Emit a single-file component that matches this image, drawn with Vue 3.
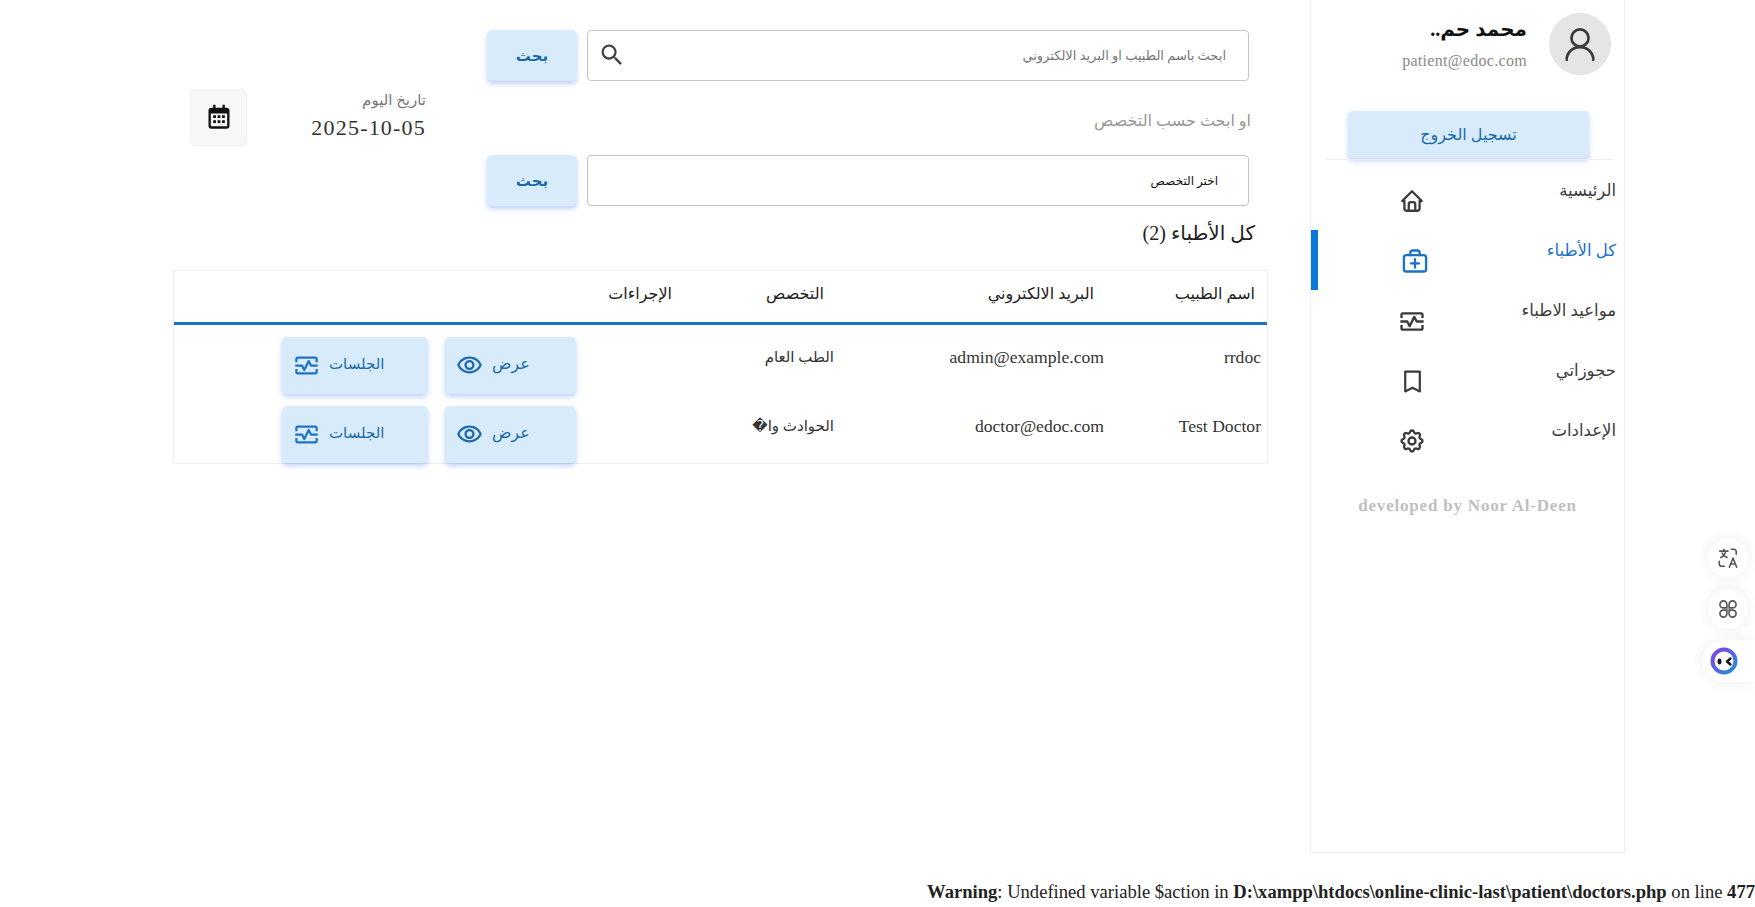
<script setup>
const navItems = [
  { label: 'الرئيسية', icon: 'home' },
  { label: 'كل الأطباء', icon: 'case', active: true },
  { label: 'مواعيد الاطباء', icon: 'pulse' },
  { label: 'حجوزاتي', icon: 'bookmark' },
  { label: 'الإعدادات', icon: 'gear' },
]
const doctors = [
  { name: 'rrdoc', email: 'admin@example.com', spec: 'الطب العام' },
  { name: 'Test Doctor', email: 'doctor@edoc.com', spec: 'الحوادث وا\uFFFD' },
]
const pulse = 'M20 4H4c-1.1 0-2 .9-2 2v3h2V6h16v3h2V6c0-1.1-.9-2-2-2zM20 18H4v-3H2v3c0 1.1.9 2 2 2h16c1.1 0 2-.9 2-2v-3h-2v3zM14.89 7.55c-.34-.68-1.45-.68-1.79 0L10 13.76l-1.11-2.21A1.02 1.02 0 0 0 8 11H2v2h5.38l1.72 3.45c.18.34.52.55.9.55s.72-.21.89-.55L14 10.24l1.11 2.21c.17.34.51.55.89.55h6v-2h-5.38l-1.73-3.45z'
const eye = 'M12 6c3.79 0 7.17 2.13 8.82 5.5C19.17 14.87 15.79 17 12 17s-7.17-2.13-8.82-5.5C4.83 8.13 8.21 6 12 6m0-2C7 4 2.73 7.11 1 11.5 2.73 15.89 7 19 12 19s9.27-3.11 11-7.5C21.27 7.11 17 4 12 4zm0 5c1.38 0 2.5 1.12 2.5 2.5S13.38 14 12 14s-2.5-1.12-2.5-2.5S10.62 9 12 9m0-2c-2.48 0-4.5 2.02-4.5 4.5S9.52 16 12 16s4.5-2.02 4.5-4.5S14.48 7 12 7z'
const gear = 'M10.325 4.317c.426-1.756 2.924-1.756 3.35 0a1.724 1.724 0 0 0 2.573 1.066c1.543-.94 3.31.826 2.37 2.37a1.724 1.724 0 0 0 1.065 2.572c1.756.426 1.756 2.924 0 3.35a1.724 1.724 0 0 0-1.066 2.573c.94 1.543-.826 3.31-2.37 2.37a1.724 1.724 0 0 0-2.572 1.065c-.426 1.756-2.924 1.756-3.35 0a1.724 1.724 0 0 0-2.573-1.066c-1.543.94-3.31-.826-2.37-2.37a1.724 1.724 0 0 0-1.065-2.572c-1.756-.426-1.756-2.924 0-3.35a1.724 1.724 0 0 0 1.066-2.573c-.94-1.543.826-3.31 2.37-2.37c1 .608 2.296.07 2.572-1.065z'
</script>

<template>
  <div class="page" dir="rtl">
    <div class="shell">
      <aside class="sidebar">
        <div class="profile">
          <div class="avatar">
            <svg viewBox="0 0 24 24" width="38" height="38" fill="none" stroke="#3a3a3a" stroke-width="1.7" stroke-linecap="round"><circle cx="12" cy="8.2" r="5.4"/><path d="M3.6 22c0-4.6 3.7-8 8.4-8s8.4 3.4 8.4 8"/></svg>
          </div>
          <div class="who">
            <div class="who-name">محمد حم..</div>
            <div class="who-mail">patient@edoc.com</div>
          </div>
        </div>
        <button class="soft logout">تسجيل الخروج</button>
        <div class="divider"></div>
        <nav>
          <div v-for="item in navItems" :key="item.icon" class="nav-row" :class="{ active: item.active }">
            <span class="nav-label">{{ item.label }}</span>
            <span class="nav-icon">
              <svg v-if="item.icon === 'home'" viewBox="0 0 24 24" width="26" height="26" fill="none" stroke="currentColor" stroke-width="2.1" stroke-linejoin="round" stroke-linecap="round"><path d="M5 12H3l9-9 9 9h-2M5 12v7a2 2 0 0 0 2 2h10a2 2 0 0 0 2-2v-7M9 21v-6a2 2 0 0 1 2-2h2a2 2 0 0 1 2 2v6"/></svg>
              <svg v-else-if="item.icon === 'case'" class="shift-case" viewBox="0 0 24 24" width="28" height="28" fill="none" stroke="currentColor" stroke-width="2" stroke-linejoin="round" stroke-linecap="round"><rect x="2.500" y="7" width="19" height="14" rx="2"/><path d="M8 7V5a2 2 0 0 1 2-2h4a2 2 0 0 1 2 2v2M8.500 14h7M12 10.500v7"/></svg>
              <svg v-else-if="item.icon === 'pulse'" viewBox="0 0 24 24" width="29" height="29" fill="currentColor"><path :d="pulse"/></svg>
              <svg v-else-if="item.icon === 'bookmark'" viewBox="0 0 24 24" width="25" height="25" fill="none" stroke="currentColor" stroke-width="2.100" stroke-linejoin="round"><path d="M5 2.500h14v19l-7-3.400-7 3.400z"/></svg>
              <svg v-else viewBox="0 0 24 24" width="28" height="28" fill="none" stroke="currentColor" stroke-width="2"><path :d="gear"/><circle cx="12" cy="12" r="3"/></svg>
            </span>
          </div>
        </nav>
        <div class="credit" dir="ltr">developed by Noor Al-Deen</div>
      </aside>

      <main class="main">
        <div class="top">
          <form class="filters" @submit.prevent>
            <div class="field-row">
              <div class="search-box">
                <input class="control" type="text" placeholder="ابحث باسم الطبيب او البريد الالكتروني" />
                <svg class="search-icon" viewBox="0 0 24 24" width="28" height="28" fill="#444"><path d="M15.500 14h-.79l-.28-.27A6.470 6.470 0 0 0 16 9.500 6.500 6.500 0 1 0 9.500 16c1.610 0 3.090-.59 4.230-1.570l.27.28v.79l5 4.990L20.490 19l-4.990-5zm-6 0C7.010 14 5 11.990 5 9.500S7.010 5 9.500 5 14 7.010 14 9.500 11.990 14 9.500 14z"/></svg>
              </div>
              <button class="soft search-btn">بحث</button>
            </div>
            <div class="or-label">او ابحث حسب التخصص</div>
            <div class="field-row">
              <select class="control select"><option>اختر التخصص</option></select>
              <button class="soft search-btn">بحث</button>
            </div>
          </form>
          <div class="today">
            <div class="today-text">
              <div class="today-label">تاريخ اليوم</div>
              <div class="today-date" dir="ltr">2025-10-05</div>
            </div>
            <div class="cal-box">
              <svg viewBox="0 0 24 24" width="28" height="28" fill="#111"><path d="M7 1.500h2V4h6V1.500h2V4h1.500A2.500 2.500 0 0 1 21 6.500v13a2.500 2.500 0 0 1-2.500 2.500h-13A2.500 2.500 0 0 1 3 19.500v-13A2.500 2.500 0 0 1 5.500 4H7zM5 9v10.500c0 .28.22.5.5.5h13a.5.5 0 0 0 .5-.5V9z"/><path d="M7 10.500h2.400v2.400H7zM10.800 10.500h2.400v2.400h-2.400zM14.600 10.500H17v2.400h-2.400zM7 14.800h2.400v2.400H7zM10.800 14.800h2.400v2.400h-2.400zM14.600 14.800H17v2.400h-2.400z"/></svg>
            </div>
          </div>
        </div>

        <h2 class="title">كل الأطباء (2)</h2>

        <table class="table">
          <colgroup>
            <col class="c-name" /><col class="c-mail" /><col class="c-spec" /><col />
          </colgroup>
          <thead>
            <tr>
              <th>اسم الطبيب</th>
              <th>البريد الالكتروني</th>
              <th>التخصص</th>
              <th>الإجراءات</th>
            </tr>
          </thead>
          <tbody>
            <tr v-for="doc in doctors" :key="doc.email">
              <td><span dir="ltr">{{ doc.name }}</span></td>
              <td><span dir="ltr">{{ doc.email }}</span></td>
              <td class="spec">{{ doc.spec }}</td>
              <td class="actions">
                <div class="action-row">
                  <button class="soft act view">
                    <span class="act-text">عرض</span>
                    <svg viewBox="0 0 24 24" width="27" height="27" fill="#1f6aae"><path :d="eye"/></svg>
                  </button>
                  <button class="soft act sessions">
                    <span class="act-text sessions-text">الجلسات</span>
                    <svg viewBox="0 0 24 24" width="27" height="27" fill="#1d74c4"><path :d="pulse"/></svg>
                  </button>
                </div>
              </td>
            </tr>
          </tbody>
        </table>
      </main>
    </div>

    <p class="warning" dir="ltr"><b>Warning</b>: Undefined variable $action in <b>D:\xampp\htdocs\online-clinic-last\patient\doctors.php</b> on line <b>477</b></p>

    <div class="floats" dir="ltr">
      <div class="float-btn">
        <svg viewBox="0 0 24 24" width="22" height="22" fill="none" stroke="#555" stroke-width="1.700" stroke-linecap="round" stroke-linejoin="round"><path d="M3 4.500h9M7.500 2.500v2M4 11.500c2.500-1 4.500-3.500 5.500-7M5.500 6.500c1 2.500 3 4 5.500 5M13.500 22l4-10 4 10M15 18.500h5M15.500 2.500h3a2.500 2.500 0 0 1 2.500 2.500v3M2.500 15.500v3a2.500 2.500 0 0 0 2.500 2.500h3"/></svg>
      </div>
      <div class="float-btn">
        <svg viewBox="0 0 24 24" width="22" height="22" fill="none" stroke="#555" stroke-width="1.800"><path d="M10.800 10.800H7a3.800 3.800 0 1 1 3.800-3.800zM13.200 10.800V7A3.800 3.800 0 1 1 17 10.800zM10.800 13.200V17A3.800 3.800 0 1 1 7 13.200zM13.200 13.200H17a3.800 3.800 0 1 1-3.800 3.800z"/></svg>
      </div>
      <div class="float-pill">
        <svg viewBox="0 0 28 28" width="28" height="28"><defs><linearGradient id="botg" x1="0" y1="0" x2="1" y2="1"><stop offset="0" stop-color="#8b3fe0"/><stop offset="1" stop-color="#1f8fe0"/></linearGradient></defs><circle cx="14" cy="14" r="11.500" fill="#fff" stroke="url(#botg)" stroke-width="4"/><ellipse cx="9.500" cy="14.500" rx="2" ry="3" fill="#15151f"/><path d="M20.500 11.500l-3.500 3 3.500 3" fill="none" stroke="#15151f" stroke-width="2.400" stroke-linecap="round" stroke-linejoin="round"/></svg>
      </div>
    </div>
  </div>
</template>

<style>
html, body { margin: 0; background: #fff; }
</style>

<style scoped>
.page {
  position: relative;
  height: 907px;
  overflow: hidden;
  font-family: "Liberation Serif", "DejaVu Sans", serif;
  color: #222;
  background: #fff;
}
.shell { display: flex; height: 853px; padding: 0 130px 0 173px; gap: 42px; }
.sidebar {
  width: 315px;
  flex: none;
  box-sizing: border-box;
  border: 1px solid #eeeeee;
  border-top: 0;
  padding-top: 13px;
}
.profile { display: flex; align-items: flex-start; padding-right: 13px; height: 98px; }
.avatar {
  width: 62px; height: 62px; border-radius: 50%;
  background: #e5e5e5;
  display: flex; align-items: center; justify-content: center;
}
.who { margin-right: 22px; }
.who-name { font-size: 20px; font-weight: 700; color: #111; line-height: 30px; margin-top: 1px; }
.who-mail { font-size: 16px; color: #8a8a8a; line-height: 20px; margin-top: 7px; letter-spacing: .3px; }
.soft {
  background: #d8ebfa;
  color: #1969aa;
  border: 0;
  border-radius: 5px;
  box-shadow: 0 3px 5px 0 rgba(57, 108, 240, .3);
  font-family: inherit;
  padding: 0;
}
.logout { display: block; width: 241px; height: 47px; margin-right: 35px; font-size: 16px; }
.divider { height: 1px; background: #eeeeee; margin: 1px 11px 0 11px; width: 287px; }
nav { margin-top: 10px; }
.nav-row { height: 60px; box-sizing: border-box; display: flex; position: relative; padding-right: 8px; color: #3a3a3a; }
.nav-row.active { color: #1a73c8; }
.nav-row.active::after {
  content: ""; position: absolute; left: 0; top: 0; bottom: 0; width: 7px; background: #0a76d8;
}
.nav-label { font-size: 16.500px; line-height: 24px; margin-top: 9px; }
.nav-icon { position: absolute; left: 87px; top: 17px; width: 28px; height: 28px; display: flex; align-items: center; justify-content: center; }
.shift-case { position: relative; left: 3px; }
.credit { margin-top: 26px; text-align: center; font-size: 17px; font-weight: 700; color: #c0c0c0; letter-spacing: .8px; }

.main { width: 1095px; flex: none; }
.top { display: flex; align-items: center; padding-top: 30px; }
.filters { width: 762px; margin-right: 19px; flex: none; }
.field-row { display: flex; gap: 10px; height: 51px; }
.search-box { position: relative; flex: 1; display: flex; }
.control {
  flex: 1; min-width: 0; box-sizing: border-box; height: 51px;
  border: 1px solid #c4c4c4; border-radius: 4px; background: #fff;
  font-family: inherit; font-size: 13px; padding: 0 22px; color: #222; outline: 0;
}
.control::placeholder { color: #777; }
.select { appearance: none; font-size: 12px; padding: 0 30px; color: #111; }
.search-icon { position: absolute; left: 11px; top: 11px; }
.search-btn { width: 90px; height: 51px; font-size: 15px; font-weight: 700; flex: none; }
.or-label { margin: 0 -2px 0 0; height: 74px; line-height: 80px; font-size: 16px; color: #999; }
.today { flex: 1; display: flex; justify-content: space-between; align-items: center; padding: 0 18px 2px 17px; margin-right: 43px; }
.today-text { text-align: right; margin-top: -3px; }
.today-label { font-size: 15px; color: #777; line-height: 22px; margin-bottom: 3px; }
.today-date { font-size: 22px; color: #333; line-height: 28px; letter-spacing: 1.200px; text-align: right; }
.cal-box { width: 57px; height: 57px; box-sizing: border-box; background: #f7f7f7; border: 1px solid #eef0f2; border-radius: 5px; display: flex; align-items: center; justify-content: center; }

.title { margin: 11px 13px 0 0; font-size: 20px; font-weight: 400; color: #222; line-height: 32px; }
.table { width: 100%; margin-top: 21px; border-collapse: separate; border-spacing: 0; table-layout: fixed; border: 1px solid #eeeeee; box-sizing: border-box; }
.c-name { width: 157px; }
.c-mail { width: 270px; }
.c-spec { width: 160px; }
th {
  height: 54px; padding: 0 0 6px; box-sizing: border-box; text-align: right; font-weight: 400; font-size: 16px; color: #222;
  border-bottom: 3px solid #1a73c8; vertical-align: middle;
}
th:nth-child(1) { padding-right: 12px; }
th:nth-child(2) { padding-right: 16px; }
th:nth-child(3) { padding-right: 16px; }
th:nth-child(4) { padding-right: 8px; }
td { padding: 20px 6px 0 0; font-size: 17.600px; color: #333; height: 69px; text-align: right; vertical-align: top; line-height: 24px; box-sizing: border-box; }
td.spec { font-size: 15px; color: #333; }
td.actions { padding: 12px 0 0; }
.action-row { display: flex; padding-right: 104px; gap: 17px; }
.act { height: 57px; display: flex; align-items: center; justify-content: flex-end; gap: 9px; padding-left: 11px; flex: none; }
.act-text { font-size: 16px; margin-bottom: 4px; }
.sessions-text { font-size: 15px; }
.view { width: 131px; }
.sessions { width: 146px; }

.warning { position: absolute; left: 0; right: 0; bottom: 4px; margin: 0; text-align: right; font-size: 18.600px; line-height: 22px; color: #222; white-space: nowrap; }

.floats { position: absolute; right: 0; top: 538px; width: 53px; }
.float-btn, .float-pill {
  background: #fff;
  box-shadow: 0 0 14px rgba(0, 0, 0, .07);
  display: flex; align-items: center; justify-content: center;
}
.float-btn { width: 40px; height: 40px; border-radius: 50%; margin: 0 0 11px 6px; }
.float-pill { width: 53px; height: 42px; border-radius: 21px 0 0 21px; justify-content: flex-start; padding-left: 8px; box-sizing: border-box; }
</style>
